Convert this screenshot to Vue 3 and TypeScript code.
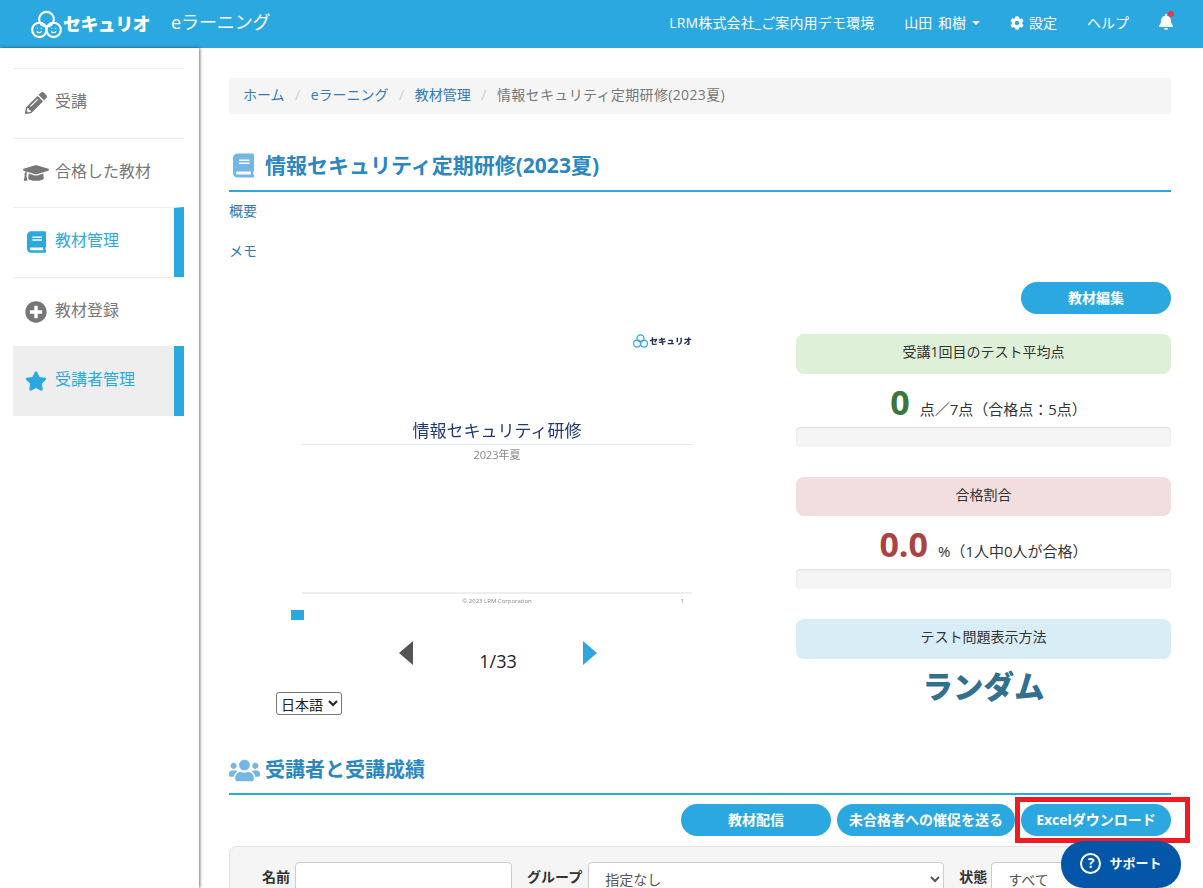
<script setup lang="ts">
const menu = [
  { label: '受講', icon: 'pencil', vb: '0 0 512 512', active: false, current: false },
  { label: '合格した教材', icon: 'cap', vb: '0 0 640 512', active: false, current: false },
  { label: '教材管理', icon: 'book', vb: '0 0 448 512', active: true, current: false },
  { label: '教材登録', icon: 'plus', vb: '0 0 512 512', active: false, current: false },
  { label: '受講者管理', icon: 'star', vb: '0 0 576 512', active: true, current: true },
]

const paths: Record<string, string> = {
  pencil: 'M497.9 142.1l-46.1 46.1c-4.7 4.7-12.3 4.7-17 0l-111-111c-4.7-4.7-4.7-12.3 0-17l46.1-46.1c18.7-18.7 49.1-18.7 67.9 0l60.1 60.1c18.8 18.7 18.8 49.1 0 67.9zM284.2 99.8L21.6 362.4.4 483.9c-2.9 16.4 11.4 30.6 27.8 27.8l121.5-21.3 262.6-262.6c4.7-4.7 4.7-12.3 0-17l-111-111c-4.8-4.7-12.4-4.7-17.1 0zM124.1 339.9c-5.5-5.5-5.5-14.3 0-19.8l154-154c5.5-5.5 14.3-5.5 19.8 0s5.5 14.3 0 19.8l-154 154c-5.5 5.5-14.3 5.5-19.8 0zM88 424h48v36.3l-64.5 11.3-31.1-31.1L51.7 376H88v48z',
  cap: 'M622.34 153.2L343.4 67.5c-15.2-4.67-31.6-4.67-46.79 0L17.66 153.2c-23.54 7.23-23.54 38.36 0 45.59l48.63 14.94c-10.67 13.19-17.23 29.28-17.88 46.9C38.78 266.15 32 276.11 32 288c0 10.78 5.68 19.85 13.86 25.65L20.33 428.53C18.11 438.52 25.71 448 35.94 448h56.11c10.24 0 17.84-9.48 15.62-19.47L82.14 313.65C90.32 307.85 96 298.78 96 288c0-11.57-6.47-21.25-15.66-26.87.76-15.02 8.44-28.3 20.69-36.72L296.6 284.5c9.06 2.78 26.44 6.25 46.79 0l278.95-85.7c23.55-7.24 23.55-38.36 0-45.6zM352.79 315.09c-28.53 8.76-52.84 3.92-65.59 0l-145.02-44.55L128 384c0 35.35 85.96 64 192 64s192-28.65 192-64l-14.18-113.47-145.03 44.56z',
  book: 'M448 360V24c0-13.3-10.7-24-24-24H96C43 0 0 43 0 96v320c0 53 43 96 96 96h328c13.3 0 24-10.7 24-24v-16c0-7.5-3.5-14.3-8.9-18.7-4.2-15.4-4.2-59.3 0-74.7 5.4-4.3 8.9-11.1 8.9-18.6zM128 134c0-3.3 2.7-6 6-6h212c3.3 0 6 2.7 6 6v20c0 3.3-2.7 6-6 6H134c-3.3 0-6-2.7-6-6v-20zm0 64c0-3.3 2.7-6 6-6h212c3.3 0 6 2.7 6 6v20c0 3.3-2.7 6-6 6H134c-3.3 0-6-2.7-6-6v-20zm253.4 250H96c-17.7 0-32-14.3-32-32 0-17.6 14.4-32 32-32h285.4c-1.9 17.1-1.9 46.9 0 64z',
  plus: 'M256 8C119 8 8 119 8 256s111 248 248 248 248-111 248-248S393 8 256 8zm144 276c0 6.6-5.4 12-12 12h-92v92c0 6.6-5.4 12-12 12h-56c-6.6 0-12-5.4-12-12v-92h-92c-6.6 0-12-5.4-12-12v-56c0-6.6 5.4-12 12-12h92v-92c0-6.6 5.4-12 12-12h56c6.6 0 12 5.4 12 12v92h92c6.6 0 12 5.4 12 12v56z',
  star: 'M259.3 17.8L194 150.2 47.9 171.5c-26.2 3.8-36.7 36.1-17.7 54.6l105.7 103-25 145.5c-4.5 26.3 23.2 46 46.4 33.7L288 439.6l130.7 68.7c23.2 12.2 50.9-7.4 46.4-33.7l-25-145.5 105.7-103c19-18.5 8.5-50.8-17.7-54.6L382 150.2 316.7 17.8c-11.7-23.6-45.6-23.9-57.4 0z',
  users: 'M96 224c35.3 0 64-28.7 64-64s-28.7-64-64-64-64 28.7-64 64 28.7 64 64 64zm448 0c35.3 0 64-28.7 64-64s-28.7-64-64-64-64 28.7-64 64 28.7 64 64 64zm32 32h-64c-17.6 0-33.5 7.1-45.1 18.6 40.3 22.1 68.9 62 75.1 109.4h66c17.7 0 32-14.3 32-32v-32c0-35.3-28.7-64-64-64zm-256 0c61.9 0 112-50.1 112-112S381.9 32 320 32 208 82.1 208 144s50.1 112 112 112zm76.8 32h-8.3c-20.8 10-43.9 16-68.5 16s-47.6-6-68.5-16h-8.3C179.6 288 128 339.6 128 403.2V432c0 26.5 21.5 48 48 48h288c26.5 0 48-21.5 48-48v-28.8c0-63.6-51.6-115.2-115.2-115.2zm-223.7-13.4C161.5 263.1 145.6 256 128 256H64c-35.3 0-64 28.7-64 64v32c0 17.7 14.3 32 32 32h65.9c6.3-47.4 34.9-87.3 75.2-109.4z',
  cog: 'M487.4 315.7l-42.6-24.6c4.3-23.2 4.3-47 0-70.2l42.6-24.6c4.9-2.8 7.1-8.6 5.5-14-11.1-35.6-30-67.8-54.7-94.6-3.8-4.1-10-5.1-14.8-2.3L380.8 110c-17.9-15.4-38.5-27.3-60.8-35.1V25.8c0-5.6-3.9-10.5-9.4-11.7-36.7-8.2-74.3-7.8-109.2 0-5.5 1.2-9.4 6.1-9.4 11.7V75c-22.2 7.9-42.8 19.8-60.8 35.1L88.7 85.5c-4.9-2.8-11-1.9-14.8 2.3-24.7 26.7-43.6 58.9-54.7 94.6-1.7 5.4.6 11.2 5.5 14L67.3 221c-4.3 23.2-4.3 47 0 70.2l-42.6 24.6c-4.9 2.8-7.1 8.6-5.5 14 11.1 35.6 30 67.8 54.7 94.6 3.8 4.1 10 5.1 14.8 2.3l42.6-24.6c17.9 15.4 38.5 27.3 60.8 35.1v49.2c0 5.6 3.9 10.5 9.4 11.7 36.7 8.2 74.3 7.8 109.2 0 5.5-1.2 9.4-6.1 9.4-11.7v-49.2c22.2-7.9 42.8-19.8 60.8-35.1l42.6 24.6c4.9 2.8 11 1.9 14.8-2.3 24.7-26.7 43.6-58.9 54.7-94.6 1.5-5.5-.7-11.3-5.6-14.1zM256 336c-44.1 0-80-35.9-80-80s35.9-80 80-80 80 35.9 80 80-35.9 80-80 80z',
  bell: 'M224 512c35.32 0 63.97-28.65 63.97-64H160.03c0 35.35 28.65 64 63.97 64zm215.39-149.71c-19.32-20.76-55.47-51.99-55.47-154.29 0-77.7-54.48-139.9-127.94-155.16V32c0-17.67-14.32-32-31.98-32s-31.98 14.33-31.98 32v20.84C118.56 68.1 64.08 130.3 64.08 208c0 102.3-36.15 133.53-55.47 154.29-6 6.45-8.66 14.16-8.61 21.71.11 16.4 12.98 32 32.1 32h383.8c19.12 0 32-15.6 32.1-32 .05-7.55-2.61-15.27-8.61-21.71z',
}
</script>

<template>
  <div class="page">
    <header class="topbar">
      <div class="logo">
        <svg class="logo-mark" viewBox="0 0 32 30" fill="none" stroke="#fff" stroke-width="2.2">
          <circle cx="16" cy="9.5" r="7.6" />
          <circle cx="8.6" cy="20.6" r="7.4" />
          <circle cx="23.4" cy="20.6" r="7.4" />
          <path d="M6 22c.6 2 4 2 5 0M21 22c.6 2 4 2 5 0" stroke-width="1.3" />
          <path d="M6.6 18.4v1M10.6 18.4v1M21.4 18.4v1M25.4 18.4v1" stroke-width="1.3" />
        </svg>
        <span class="logo-text">セキュリオ</span>
      </div>
      <span class="app-name">eラーニング</span>
      <nav class="topnav">
        <span class="org">LRM株式会社_ご案内用デモ環境</span>
        <span class="user">山田 和樹<i class="caret"></i></span>
        <span class="with-icon">
          <svg class="cog" viewBox="0 0 512 512"><path :d="paths.cog" fill="#fff" /></svg>設定
        </span>
        <span>ヘルプ</span>
        <span class="bell">
          <svg viewBox="0 0 448 512"><path :d="paths.bell" fill="#fff" /></svg>
          <i class="dot"></i>
        </span>
      </nav>
    </header>

    <div class="body">
      <aside class="sidebar">
        <ul class="menu">
          <li
            v-for="item in menu"
            :key="item.label"
            class="menu-item"
            :class="{ active: item.active, current: item.current }"
          >
            <span class="menu-icon">
              <svg :viewBox="item.vb" :class="'ic-' + item.icon"><path :d="paths[item.icon]" fill="currentColor" /></svg>
            </span>
            <span class="menu-label">{{ item.label }}</span>
          </li>
        </ul>
      </aside>

      <main class="main">
        <ol class="breadcrumb">
          <li><a>ホーム</a></li>
          <li class="sep">/</li>
          <li><a>eラーニング</a></li>
          <li class="sep">/</li>
          <li><a>教材管理</a></li>
          <li class="sep">/</li>
          <li class="now">情報セキュリティ定期研修(2023夏)</li>
        </ol>

        <h2 class="section-title first">
          <svg class="title-book" viewBox="0 0 448 512"><path :d="paths.book" fill="#74b7e3" /></svg>
          情報セキュリティ定期研修(2023夏)
        </h2>
        <p class="note">概要</p>
        <p class="note memo">メモ</p>

        <div class="edit-row">
          <button class="pill">教材編集</button>
        </div>

        <div class="columns">
          <section class="viewer">
            <div class="slide">
              <div class="slide-logo">
                <svg viewBox="0 0 32 30" fill="none" stroke="#2ca8e1" stroke-width="2.6">
                  <circle cx="16" cy="9.5" r="7.6" />
                  <circle cx="8.6" cy="20.6" r="7.4" />
                  <circle cx="23.4" cy="20.6" r="7.4" />
                </svg>
                <span>セキュリオ</span>
              </div>
              <div class="slide-title">情報セキュリティ研修</div>
              <div class="slide-sub">2023年夏</div>
              <div class="slide-foot">
                <span>© 2023 LRM Corporation</span>
                <span class="slide-no">1</span>
              </div>
            </div>
            <div class="progress-mark"></div>
            <div class="pager">
              <i class="arrow prev"></i>
              <span class="count">1/33</span>
              <i class="arrow next"></i>
            </div>
            <select class="lang">
              <option>日本語</option>
            </select>
          </section>

          <section class="stats">
            <div class="stat-head green">受講1回目のテスト平均点</div>
            <div class="stat-value score">
              <b class="num green-t">0</b><span>点／7点（合格点：5点）</span>
            </div>
            <div class="bar"></div>

            <div class="stat-head red">合格割合</div>
            <div class="stat-value">
              <b class="num red-t">0.0</b><span>%（1人中0人が合格）</span>
            </div>
            <div class="bar"></div>

            <div class="stat-head blue">テスト問題表示方法</div>
            <div class="random">ランダム</div>
          </section>
        </div>

        <h2 class="section-title second">
          <svg class="title-users" viewBox="0 0 640 512"><path :d="paths.users" fill="#74b7e3" /></svg>
          受講者と受講成績
        </h2>
        <div class="actions">
          <button class="pill">教材配信</button>
          <button class="pill wide">未合格者への催促を送る</button>
          <button class="pill">Excelダウンロード</button>
        </div>

        <form class="filter">
          <label class="f-name">名前</label>
          <input class="ctl f-input" type="text" />
          <label class="f-group">グループ</label>
          <select class="ctl f-select"><option>指定なし</option></select>
          <label class="f-state">状態</label>
          <select class="ctl f-status"><option>すべて</option></select>
        </form>
      </main>
    </div>

    <div class="highlight"></div>
    <div class="support">
      <span class="q">?</span>
      <span>サポート</span>
    </div>
  </div>
</template>

<style scoped>
.page {
  position: relative;
  width: 1203px;
  height: 888px;
  overflow: hidden;
  background: #fff;
  font-family: "Open Sans", "Noto Sans CJK JP", sans-serif;
  font-size: 14px;
  line-height: 20px;
  color: #333;
}
.topbar {
  display: flex;
  align-items: center;
  height: 48px;
  padding-left: 31px;
  background: #2ca8e1;
  color: #fff;
}
.logo {
  display: flex;
  align-items: center;
  width: 140px;
}
.logo-mark {
  width: 31px;
  height: 29px;
  margin-right: 1px;
}
.logo-text {
  font-size: 18px;
  font-weight: 800;
  letter-spacing: -0.6px;
}
.app-name {
  font-size: 18px;
  margin-top: -5px;
  letter-spacing: -0.1px;
}
.topnav {
  display: flex;
  align-items: center;
  margin-top: -3px;
  margin-left: auto;
  padding-right: 30px;
  font-size: 14px;
}
.topnav > span {
  margin-left: 30px;
}
.org {
  letter-spacing: 0.15px;
}
.user {
  display: flex;
  align-items: center;
  word-spacing: 2px;
}
.caret {
  width: 0;
  height: 0;
  margin-left: 6px;
  border-left: 4px solid transparent;
  border-right: 4px solid transparent;
  border-top: 4px solid #fff;
}
.with-icon {
  display: flex;
  align-items: center;
}
.cog {
  width: 14px;
  height: 14px;
  margin-right: 5px;
}
.bell {
  position: relative;
  display: block;
  width: 14px;
  height: 17px;
}
.bell svg {
  display: block;
  width: 14px;
  height: 16px;
}
.dot {
  position: absolute;
  top: -3px;
  right: -1px;
  width: 6px;
  height: 6px;
  border-radius: 50%;
  background: #ee3a3a;
}
.body {
  display: flex;
  height: 840px;
}
.sidebar {
  flex: none;
  width: 199px;
  padding: 20px 15px 0 13px;
  box-sizing: border-box;
  box-shadow: 1px 0 3px rgba(0, 0, 0, 0.55);
}
.menu {
  margin: 0;
  padding: 0;
  list-style: none;
}
.menu-item {
  display: flex;
  align-items: center;
  height: 69.5px;
  box-sizing: border-box;
  border-top: 1px solid #eee;
  padding-left: 10px;
  color: #777;
  font-size: 16px;
}
.menu-item.active {
  color: #2ca8e1;
  border-right: 10px solid #2ca8e1;
}
.menu-item.current {
  background: #eee;
  border-top: 0;
}
.menu-label {
  margin-top: -4px;
}
.menu-icon {
  display: flex;
  justify-content: center;
  width: 26px;
  margin-right: 6px;
}
.menu-icon svg {
  height: 22px;
  width: 22px;
}
.menu-icon .ic-cap {
  width: 26px;
  margin-left: -1px;
}
.menu-icon .ic-book {
  width: 19px;
}
.main {
  flex: none;
  width: 942px;
  margin-left: 30px;
  padding-top: 30px;
}
.breadcrumb {
  display: flex;
  align-items: center;
  height: 36px;
  margin: 0;
  padding: 0 14px;
  list-style: none;
  background: #f5f5f5;
  border-radius: 4px;
}
.breadcrumb a {
  color: #337ab7;
}
.breadcrumb li {
  margin-top: -2px;
}
.breadcrumb li.sep {
  margin: -2px 10.5px 0;
  color: #ccc;
}
.breadcrumb li.now {
  color: #777;
  letter-spacing: 0.35px;
}
.section-title {
  display: flex;
  align-items: center;
  margin: 0;
  border-bottom: 2px solid #2ca8e1;
  font-size: 20px;
  font-weight: 700;
  line-height: 28px;
  color: #2a87c0;
}
.section-title.first {
  margin-top: 34px;
  padding: 0 0 8px 4px;
  height: 34px;
  font-size: 21px;
}
.section-title.second {
  height: 34px;
  padding-bottom: 6px;
  margin-top: 38px;
}
.title-book {
  width: 21px;
  height: 25px;
  margin-right: 11px;
}
.title-users {
  width: 31px;
  height: 25px;
  margin-right: 5px;
}
.note {
  margin: 9px 0 0;
  color: #337ab7;
}
.memo {
  margin-top: 20px;
}
.edit-row {
  display: flex;
  justify-content: flex-end;
  margin-top: 21px;
}
.pill {
  width: 150px;
  height: 32px;
  padding: 0;
  border: 0;
  border-radius: 16px;
  background: #2ca8e1;
  color: #fff;
  font: 700 14px/28px "Open Sans", "Noto Sans CJK JP", sans-serif;
}
.pill.wide {
  width: 178px;
}
.columns {
  display: flex;
  justify-content: space-between;
  margin-top: 20px;
}
.viewer {
  width: 540px;
  padding-left: 47px;
  box-sizing: border-box;
}
.slide {
  position: relative;
  width: 390px;
  height: 274px;
  margin-left: 26px;
  text-align: center;
  filter: blur(0.3px);
}
.slide-logo {
  display: flex;
  align-items: center;
  justify-content: flex-end;
  height: 14px;
  color: #1d2d50;
  font-size: 8.5px;
  font-weight: 800;
}
.slide-logo svg {
  width: 15px;
  height: 14px;
  margin-right: 1px;
}
.slide-title {
  margin-top: 70px;
  border-bottom: 1px solid #dfe6f5;
  font-size: 17px;
  line-height: 26px;
  color: #1f3a72;
}
.slide-sub {
  margin-top: 2px;
  font-size: 11px;
  line-height: 16px;
  color: #888;
}
.slide-foot {
  position: absolute;
  left: 0;
  right: 0;
  bottom: 2px;
  border-top: 2px solid #eee;
  padding-top: 2px;
  font-size: 6px;
  line-height: 10px;
  color: #888;
}
.slide-no {
  position: absolute;
  right: 8px;
}
.progress-mark {
  width: 13px;
  height: 10px;
  margin: 2px 0 0 15px;
  background: #2ca8e1;
}
.pager {
  display: flex;
  width: 198px;
  justify-content: space-between;
  margin: 21px 0 0 123px;
}
.arrow {
  width: 0;
  height: 0;
  border-top: 12.5px solid transparent;
  border-bottom: 12.5px solid transparent;
}
.prev {
  border-right: 14px solid #555;
}
.next {
  border-left: 14px solid #2ca8e1;
}
.count {
  margin-top: 8px;
  font-size: 18px;
  line-height: 24px;
  color: #222;
}
.lang {
  display: block;
  width: 66px;
  height: 23px;
  margin-top: 19px;
  padding: 0;
  border: 1px solid #767676;
  border-radius: 3px;
  background: #fff;
  font: 14px "Noto Sans CJK JP", sans-serif;
  color: #222;
}
.stats {
  width: 375px;
}
.stat-head {
  height: 39.5px;
  border-radius: 8px;
  text-align: center;
  line-height: 36px;
}
.green {
  background: #dff0d8;
}
.red {
  background: #f2dede;
}
.blue {
  background: #d9edf7;
}
.stat-value {
  display: flex;
  align-items: baseline;
  justify-content: center;
  height: 53px;
  font-size: 15px;
  line-height: 56px;
}
.stat-value.score {
  padding-left: 10px;
}
.num {
  margin-right: 10px;
  font-size: 34px;
  font-weight: 700;
}
.green-t {
  color: #3c763d;
}
.red-t {
  color: #a94442;
}
.bar {
  height: 20px;
  margin-bottom: 30px;
  border-radius: 4px;
  background: #f5f5f5;
  box-shadow: inset 0 1px 2px rgba(0, 0, 0, 0.1);
}
.random {
  margin-top: 6px;
  text-align: center;
  font-size: 30.5px;
  font-weight: 800;
  line-height: 42px;
  color: #31708f;
}
.actions {
  display: flex;
  justify-content: flex-end;
  gap: 6px;
  margin-top: 9px;
}
.filter {
  display: flex;
  align-items: flex-start;
  height: 80px;
  margin-top: 10px;
  padding: 15px 0 0 32px;
  box-sizing: border-box;
  border: 1px solid #e3e3e3;
  border-radius: 8px;
  background: #f5f5f5;
}
.filter label {
  font-weight: 700;
  line-height: 30px;
  color: #333;
}
.ctl {
  height: 34px;
  box-sizing: border-box;
  border: 1px solid #ccc;
  border-radius: 4px;
  background: #fff;
  font: 14px "Noto Sans CJK JP", sans-serif;
  color: #555;
  padding: 0 12px;
}
.f-input {
  width: 217px;
  margin-left: 5px;
}
.f-group {
  margin-left: 15px;
}
.f-select {
  width: 356px;
  margin-left: 6px;
}
.f-state {
  margin-left: 15px;
}
.f-status {
  width: 155px;
  margin-left: 4px;
}
.highlight {
  position: absolute;
  left: 1015px;
  top: 797px;
  width: 175px;
  height: 46px;
  box-sizing: border-box;
  border: 5px solid #ed1c24;
}
.support {
  position: absolute;
  left: 1061px;
  top: 841px;
  display: flex;
  align-items: center;
  justify-content: center;
  width: 120px;
  height: 47px;
  box-sizing: border-box;
  padding-bottom: 3px;
  border-radius: 23px;
  background: #0456a8;
  color: #fff;
  font-size: 13px;
  font-weight: 700;
}
.q {
  display: flex;
  align-items: center;
  justify-content: center;
  width: 17px;
  height: 17px;
  margin-right: 8px;
  border: 2px solid #fff;
  border-radius: 50%;
  font-size: 14px;
  line-height: 16px;
}
</style>
